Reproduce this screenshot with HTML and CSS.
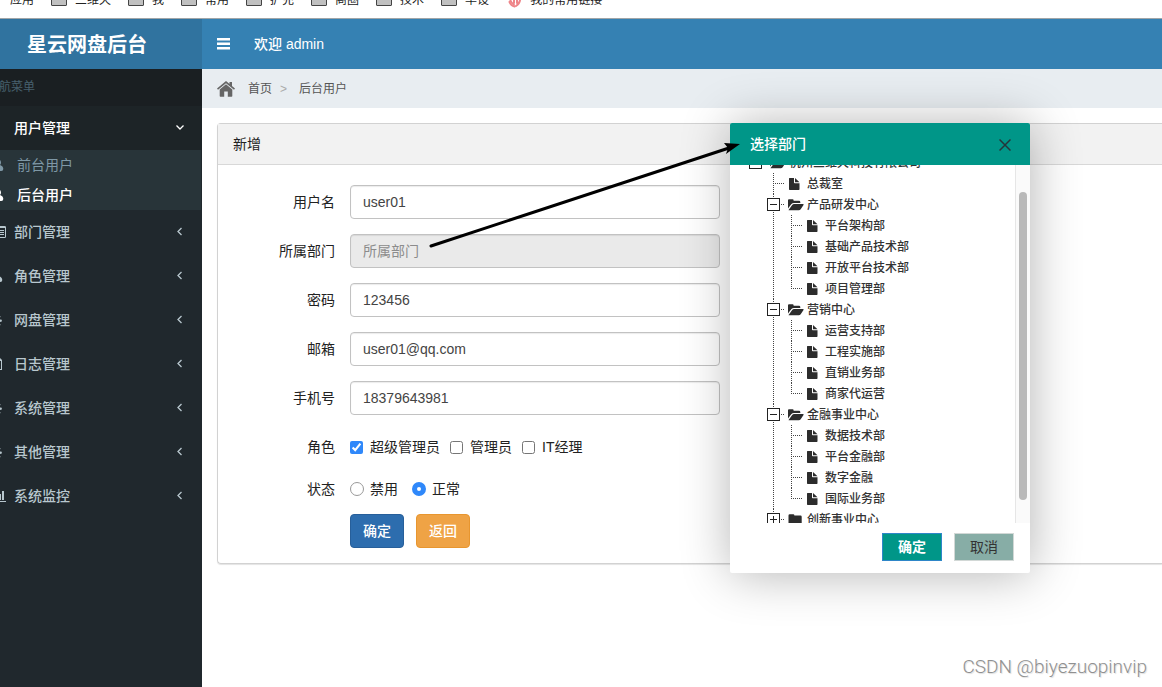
FILE: index.html
```html
<!DOCTYPE html>
<html lang="zh-CN">
<head>
<meta charset="utf-8">
<title>星云网盘后台</title>
<link rel="stylesheet" href="styles.css">
</head>
<body>
<svg class="defs" aria-hidden="true">
  <symbol id="folder-open" viewBox="0 0 16 12"><path d="M0 9.6V1.3Q0 .3 1 .3h3.6q1 0 1 1v.5H11q1.3 0 1.300 1.200V4H6Q4.300 4 3.200 5.300z"/><path d="M.6 11 4 6.300Q4.900 5 6.200 5H15q1 0 .5.900L12.700 10.200Q12 11.300 10.700 11.300H1.200Q.3 11.300.6 11z"/></symbol>
  <symbol id="folder-closed" viewBox="0 0 16 12"><path d="M.5 1.500Q.5.3 1.700.3h3.500q1.200 0 1.200 1.300H12.500q1.200 0 1.200 1.200V10.200q0 1.200-1.200 1.200H1.700Q.5 11.400.5 10.200z"/></symbol>
  <symbol id="file" viewBox="0 0 16 12"><path d="M1.500 0H6v4.500q0 .7.700.7H11.500V11.300q0 .7-.7.700H1.700Q1 12 1 11.300V.5Q1 0 1.500 0zM7 0l4.500 4.200H7z"/></symbol>
  <symbol id="user" viewBox="0 0 14 14"><path d="M7 1q3.800 0 4 3.500 0 1.500-1 2.500 3.300 1 3.300 4 0 2-2 2H3q-2 0-2-2 0-3 3-4-1-1-1-2.500Q3.200 1 7 1z"/></symbol>
  <symbol id="list" viewBox="0 0 14 14"><path fill-rule="evenodd" d="M1.500 1h11q1.500 0 1.500 1.200v9.600q0 1.200-1.500 1.200h-11Q0 13 0 11.800V2.200Q0 1 1.500 1zM1 3v9h12V3zM3 5h1v1H3zm2 0h7v1H5zM3 7h1v1H3zm2 0h7v1H5zM3 9h1v1H3zm2 0h7v1H5z"/></symbol>
  <symbol id="gear" viewBox="0 0 14 14"><path fill-rule="evenodd" d="M5 1h2l.4 1.800 1.400.6 1.600-1 1.200 1.200-1 1.600.5 1.200 1.700.4v1.800l-1.700.4-.5 1.300 1 1.500-1.200 1.200-1.600-1-1.400.6L7 13H5l-.4-1.700-1.200-.5-1.500 1L.5 10.500l.8-1.700L0 8V6l1-.5.5-1.500L1 2.500l1.500-.7L4.500 3zM6 5a2 2 0 1 0 0 4 2 2 0 0 0 0-4z"/></symbol>
  <symbol id="page" viewBox="0 0 14 14"><path fill-rule="evenodd" d="M0 1h8l2 2v10H0zM1 2v10h8V4H6V2z"/></symbol>
  <symbol id="chart" viewBox="0 0 14 14"><path d="M0 12h14v1H0zM2 8h2v3H2zM5 5h2v6H5zM7 5h2v6H7zM10 2h2v9h-2z"/></symbol>
  <symbol id="chev-left" viewBox="0 0 10 10"><path class="stroke" d="M6.500 1 3 4.500 6.500 8"/></symbol>
  <symbol id="chev-down" viewBox="0 0 10 10"><path class="stroke" d="M1.500 2.500 5 6l3.500-3.500"/></symbol>
</svg>

<div class="page">
  <nav class="bookmarks" aria-label="书签">
    <div class="bookmark-row">
      <span>应用</span>
      <span><i class="mark"></i>三维天</span>
      <span><i class="mark"></i>我</span>
      <span><i class="mark"></i>常用</span>
      <span><i class="mark"></i>扩充</span>
      <span><i class="mark"></i>商圈</span>
      <span><i class="mark"></i>技术</span>
      <span><i class="mark"></i>毕设</span>
      <span><svg class="shell" viewBox="0 0 16 16"><g fill="none" stroke="#ee8488" stroke-width="2" stroke-linecap="round"><path d="M4 6q0 4 4 7M8 3v8M14 4Q15 11 10 14M11 4v7"/><path d="M3.500 10q1.500 4 5 4.500"/></g></svg>我的常用链接</span>
    </div>
  </nav>

  <div class="shell-row">
    <aside class="sidebar">
      <h1 class="brand">星云网盘后台</h1>
      <p class="menu-caption">导航菜单</p>
      <ul class="menu">
        <li class="open">
          <a href="#"><span class="menu-icon"></span>用户管理<svg class="chev"><use href="#chev-down"/></svg></a>
          <ul class="submenu">
            <li><a href="#"><svg class="sub-icon"><use href="#user"/></svg>前台用户</a></li>
            <li><a href="#" class="current"><svg class="sub-icon"><use href="#user"/></svg>后台用户</a></li>
          </ul>
        </li>
        <li><a href="#"><span class="menu-icon end"><svg><use href="#list"/></svg></span>部门管理<svg class="chev"><use href="#chev-left"/></svg></a></li>
        <li><a href="#"><span class="menu-icon near"><svg><use href="#user"/></svg></span>角色管理<svg class="chev"><use href="#chev-left"/></svg></a></li>
        <li><a href="#"><span class="menu-icon near"><svg><use href="#gear"/></svg></span>网盘管理<svg class="chev"><use href="#chev-left"/></svg></a></li>
        <li><a href="#"><span class="menu-icon late"><svg><use href="#page"/></svg></span>日志管理<svg class="chev"><use href="#chev-left"/></svg></a></li>
        <li><a href="#"><span class="menu-icon near"><svg><use href="#gear"/></svg></span>系统管理<svg class="chev"><use href="#chev-left"/></svg></a></li>
        <li><a href="#"><span class="menu-icon near"><svg><use href="#gear"/></svg></span>其他管理<svg class="chev"><use href="#chev-left"/></svg></a></li>
        <li><a href="#"><span class="menu-icon end"><svg><use href="#chart"/></svg></span>系统监控<svg class="chev"><use href="#chev-left"/></svg></a></li>
      </ul>
    </aside>

    <main class="main">
      <header class="topbar">
        <button class="toggle" type="button" aria-label="切换菜单"><svg viewBox="0 0 13 12"><path d="M0 0h13v2.500H0zM0 4.500h13V7H0zM0 9h13v2.500H0z"/></svg></button>
        <span>欢迎 admin</span>
      </header>
      <nav class="crumbs" aria-label="位置">
        <svg class="home" viewBox="0 0 18 16"><path d="M9 0 18 7.600 17 8.800 9 2.200 1 8.800 0 7.600zM12.500 1H15V5.500L12.500 3.400zM9 3.200 15.300 8.500V15q0 .7-.7.700H10.800V10.500H7.200v5.200H3.400q-.7 0-.7-.7V8.500z"/></svg>
        <a href="#">首页</a><span class="sep">&gt;</span><span>后台用户</span>
      </nav>

      <section class="panel">
        <h2>新增</h2>
        <form class="form">
          <div class="field"><label for="name">用户名</label><input id="name" type="text" value="user01"></div>
          <div class="field"><label for="dept">所属部门</label><input id="dept" type="text" placeholder="所属部门" readonly></div>
          <div class="field"><label for="pwd">密码</label><input id="pwd" type="text" value="123456"></div>
          <div class="field"><label for="mail">邮箱</label><input id="mail" type="text" value="user01@qq.com"></div>
          <div class="field"><label for="phone">手机号</label><input id="phone" type="text" value="18379643981"></div>
          <div class="field tight" role="group" aria-labelledby="role-l"><span class="label" id="role-l">角色</span>
            <div class="choices">
              <label><input type="checkbox" checked>超级管理员</label>
              <label><input type="checkbox">管理员</label>
              <label><input type="checkbox">IT经理</label>
            </div>
          </div>
          <div class="field tight" role="group" aria-labelledby="state-l"><span class="label" id="state-l">状态</span>
            <div class="choices radios">
              <label><input type="radio" name="state">禁用</label>
              <label><input type="radio" name="state" checked>正常</label>
            </div>
          </div>
          <div class="field last"><span></span>
            <div class="actions">
              <button type="button" class="btn primary">确定</button>
              <button type="button" class="btn warning">返回</button>
            </div>
          </div>
        </form>
      </section>
    </main>
  </div>

  <section class="dialog" role="dialog" aria-labelledby="dlg-title">
    <header class="dialog-head">
      <h2 id="dlg-title">选择部门</h2>
      <button type="button" class="close" aria-label="关闭"><svg viewBox="0 0 12 12"><path d="M.5.5l11 11M11.500.5l-11 11"/></svg></button>
    </header>
    <div class="dialog-body">
      <ul class="tree">
        <li>
          <div class="node"><span class="switch"><i class="box"></i></span><svg><use href="#folder-open"/></svg>杭州三维天科技有限公司</div>
          <ul>
            <li><div class="node leaf"><span class="switch"></span><svg><use href="#file"/></svg>总裁室</div></li>
            <li>
              <div class="node"><span class="switch"><i class="box"></i></span><svg><use href="#folder-open"/></svg>产品研发中心</div>
              <ul>
                <li><div class="node leaf"><span class="switch"></span><svg><use href="#file"/></svg>平台架构部</div></li>
                <li><div class="node leaf"><span class="switch"></span><svg><use href="#file"/></svg>基础产品技术部</div></li>
                <li><div class="node leaf"><span class="switch"></span><svg><use href="#file"/></svg>开放平台技术部</div></li>
                <li><div class="node leaf"><span class="switch"></span><svg><use href="#file"/></svg>项目管理部</div></li>
              </ul>
            </li>
            <li>
              <div class="node"><span class="switch"><i class="box"></i></span><svg><use href="#folder-open"/></svg>营销中心</div>
              <ul>
                <li><div class="node leaf"><span class="switch"></span><svg><use href="#file"/></svg>运营支持部</div></li>
                <li><div class="node leaf"><span class="switch"></span><svg><use href="#file"/></svg>工程实施部</div></li>
                <li><div class="node leaf"><span class="switch"></span><svg><use href="#file"/></svg>直销业务部</div></li>
                <li><div class="node leaf"><span class="switch"></span><svg><use href="#file"/></svg>商家代运营</div></li>
              </ul>
            </li>
            <li>
              <div class="node"><span class="switch"><i class="box"></i></span><svg><use href="#folder-open"/></svg>金融事业中心</div>
              <ul>
                <li><div class="node leaf"><span class="switch"></span><svg><use href="#file"/></svg>数据技术部</div></li>
                <li><div class="node leaf"><span class="switch"></span><svg><use href="#file"/></svg>平台金融部</div></li>
                <li><div class="node leaf"><span class="switch"></span><svg><use href="#file"/></svg>数字金融</div></li>
                <li><div class="node leaf"><span class="switch"></span><svg><use href="#file"/></svg>国际业务部</div></li>
              </ul>
            </li>
            <li><div class="node"><span class="switch"><i class="box plus"></i></span><svg><use href="#folder-closed"/></svg>创新事业中心</div></li>
          </ul>
        </li>
      </ul>
      <div class="track"><div class="thumb"></div></div>
    </div>
    <footer class="dialog-foot">
      <button type="button" class="ok">确定</button>
      <button type="button" class="cancel">取消</button>
    </footer>
  </section>

  <svg class="arrow" viewBox="0 0 320 110" aria-hidden="true"><path d="M6 106 304 8" fill="none" stroke="#000" stroke-width="3" stroke-linecap="round"/><path d="M315 4 299 3 303 8 301 14z"/></svg>
  <div class="watermark">CSDN @biyezuopinvip</div>
</div>
</body>
</html>
```

FILE: styles.css
```css
* { box-sizing: border-box; }

body {
  margin: 0;
  overflow: hidden;
  background: #fff;
  color: #222;
  font: 14px/20px "Liberation Sans", "Noto Sans CJK SC", sans-serif;
}

h1, h2, p, ul { margin: 0; padding: 0; font-weight: 500; }
ul { list-style: none; }
a { color: inherit; text-decoration: none; }
button, input { font: inherit; }
button { cursor: pointer; }
.defs { display: none; }
.stroke { fill: none; stroke: currentColor; stroke-width: 1.3px; }

.page {
  position: relative;
  display: flex;
  flex-direction: column;
  min-height: 100vh;
  overflow: hidden;
}

/* bookmarks */
.bookmarks {
  height: 19px;
  overflow: hidden;
  border-bottom: 1px solid #a0a5a8;
  font-size: 12px;
  line-height: 16px;
}
.bookmark-row { display: flex; gap: 17px; margin-top: -8px; padding-left: 10px; white-space: nowrap; }
.bookmark-row span { display: flex; align-items: center; gap: 8px; }
.mark { width: 16px; height: 12px; background: #c0c0c0; border: 1px solid #444; border-radius: 1px; }
.shell { width: 16px; height: 16px; }

.shell-row { display: flex; flex: 1; }

/* sidebar */
.sidebar { flex: none; width: 230px; margin-left: -28px; background: #20282d; color: #b8c7ce; font-weight: 500; }
.brand {
  height: 50px;
  padding-top: 1px;
  background: #30739f;
  color: #fff;
  font-size: 20px;
  font-weight: 700;
  line-height: 50px;
  text-align: center;
}
.menu-caption {
  padding: 8px 15px;
  height: 37px;
  background: #1a1f22;
  color: #47606d;
  font-size: 12px;
  font-weight: 400;
}
.menu a { display: flex; align-items: center; height: 44px; padding: 0 17px 0 15px; }
.menu-icon { display: flex; width: 20px; margin-right: 7px; }
.menu-icon svg { width: 14px; height: 14px; fill: currentColor; }
.menu-icon.near { padding-left: 2px; }
.menu-icon.late { padding-left: 5px; }
.menu-icon.end { padding-left: 5px; }
.chev { width: 10px; height: 10px; margin-left: auto; }
.menu .open > a { background: #1d2427; color: #fff; }
.submenu { background: #283439; margin-right: 1px; }
.menu .submenu a { height: 30px; padding-left: 18px; color: #7f98a6; font-weight: 400; }
.menu .submenu .current { color: #fff; font-weight: 500; }
.sub-icon { width: 14px; height: 14px; margin-right: 13px; fill: currentColor; }

/* header */
.main { flex: 1; min-width: 0; }
.topbar { display: flex; align-items: center; gap: 24px; height: 50px; padding-left: 15px; background: #3581b3; color: #fff; font-weight: 500; }
.toggle { display: flex; padding: 0; border: 0; background: none; }
.toggle svg { width: 13px; height: 12px; fill: #fff; }
.crumbs { display: flex; align-items: center; height: 39px; padding-left: 15px; background: #e8edf1; color: #555; font-size: 12px; }
.home { width: 18px; height: 16px; margin-right: 13px; fill: #666; }
.sep { padding: 0 12px 0 8px; color: #aaa; }

/* form panel */
.panel { margin: 15px 0 0 15px; border: 1px solid #d2d2d2; border-right: 0; border-radius: 4px 0 0 4px; box-shadow: 0 1px 1px #e4e4e4; }
.panel h2 { height: 41px; padding: 10px 15px; border-bottom: 1px solid #d8d8d8; background: #f2f2f2; font-size: 14px; font-weight: 400; }
.form { padding: 20px 0 15px; }
.field { display: grid; grid-template-columns: 117px minmax(0, 370px); gap: 15px; align-items: center; min-height: 34px; margin-bottom: 15px; }
.field.tight { margin-bottom: 8px; }
.field.last { margin-bottom: 0; }
.field > label, .label { text-align: right; }
.field input[type="text"] {
  width: 100%;
  height: 34px;
  padding: 6px 12px;
  border: 1px solid #c2c2c2;
  border-radius: 4px;
  box-shadow: inset 0 1px 1px rgba(0, 0, 0, .08);
  color: #444;
  outline: 0;
}
.field input[readonly] { background: #eaeaea; }
.field input::placeholder { color: #8c8c8c; opacity: 1; }
.choices { display: flex; gap: 10px; }
.choices label { display: flex; align-items: center; gap: 7px; }
.choices input { width: 13px; height: 13px; margin: 0; accent-color: #2f88fa; }
.radios { gap: 14px; }
.radios label { gap: 6px; }
.radios input { appearance: none; width: 14px; height: 14px; border: 1px solid #999; border-radius: 50%; background: #fff; }
.radios input:checked { border: 5px solid #2f88fa; }
.actions { display: flex; gap: 12px; }
.btn { height: 34px; padding: 0 12px; border: 1px solid; border-radius: 4px; color: #fff; font-weight: 500; }
.primary { background: #2d6dae; border-color: #275f9a; }
.warning { background: #efa345; border-color: #e8962f; }

/* department dialog */
.dialog {
  position: absolute;
  top: 123px;
  right: 132px;
  width: 300px;
  border-radius: 2px;
  background: #fff;
  box-shadow: 1px 1px 50px rgba(0, 0, 0, .3);
}
.dialog-head { display: flex; align-items: center; justify-content: space-between; height: 42px; padding: 0 19px 0 20px; border-radius: 2px 2px 0 0; background: #009688; color: #fff; }
.dialog-head h2 { font-size: 14px; font-weight: 500; }
.close { display: flex; padding: 2px 0 0; border: 0; background: none; }
.close svg { width: 12px; height: 12px; fill: none; stroke: #24363a; stroke-width: 1.5px; }
.dialog-body { display: flex; height: 358px; overflow: hidden; font-size: 12px; }
.tree { flex: 1; margin-top: -13px; padding-left: 17px; }
.tree ul { padding-left: 18px; }
.tree ul > li {
  background:
    repeating-linear-gradient(to bottom, #444 0 1px, transparent 1px 2px) 8px 0 / 1px 100% no-repeat,
    repeating-linear-gradient(to right, #444 0 1px, transparent 1px 2px) 8px 10px / 11px 1px no-repeat;
}
.tree ul ul > li:last-child {
  background-size: 1px 11px, 11px 1px;
}
.node { display: flex; align-items: center; height: 21px; color: #333; white-space: nowrap; }
.node svg { width: 16px; height: 12px; margin: 0 3px 0 5px; fill: #2c2c2c; }
.leaf svg { margin-top: 1px; }
.switch { display: flex; width: 18px; padding-left: 2px; }
.box {
  width: 13px;
  height: 13px;
  border: 1px solid #222;
  background: linear-gradient(#222, #222) center / 7px 1px no-repeat, #fff;
  box-shadow: 0 0 0 1px #fff;
}
.box.plus {
  background: linear-gradient(#222, #222) center / 7px 1px no-repeat, linear-gradient(#222, #222) center / 1px 7px no-repeat, #fff;
}
.track { width: 15px; padding: 27px 3px 0; border-left: 1px solid #e6e6e6; background: #fafafa; }
.thumb { width: 8px; height: 308px; border-radius: 4px; background: #b9b9b9; }
.dialog-foot { display: flex; justify-content: flex-end; gap: 12px; padding: 10px 16px 12px; }
.dialog-foot button { width: 60px; height: 28px; padding: 0; border: 1px solid #2e86c8; background: #009688; color: #fff; font-weight: 700; }
.dialog-foot .cancel { border-color: #d2d8d6; background: #87ada6; color: #333; font-weight: 400; }

/* callout from the department field to the dialog */
.arrow { position: absolute; top: 140px; left: 425px; width: 320px; height: 110px; }

.watermark {
  position: absolute;
  right: 15px;
  bottom: 8px;
  color: #909090;
  font: 300 19px/24px Roboto, sans-serif;
  text-shadow: 1px 1px 1px #ddd;
}
```
